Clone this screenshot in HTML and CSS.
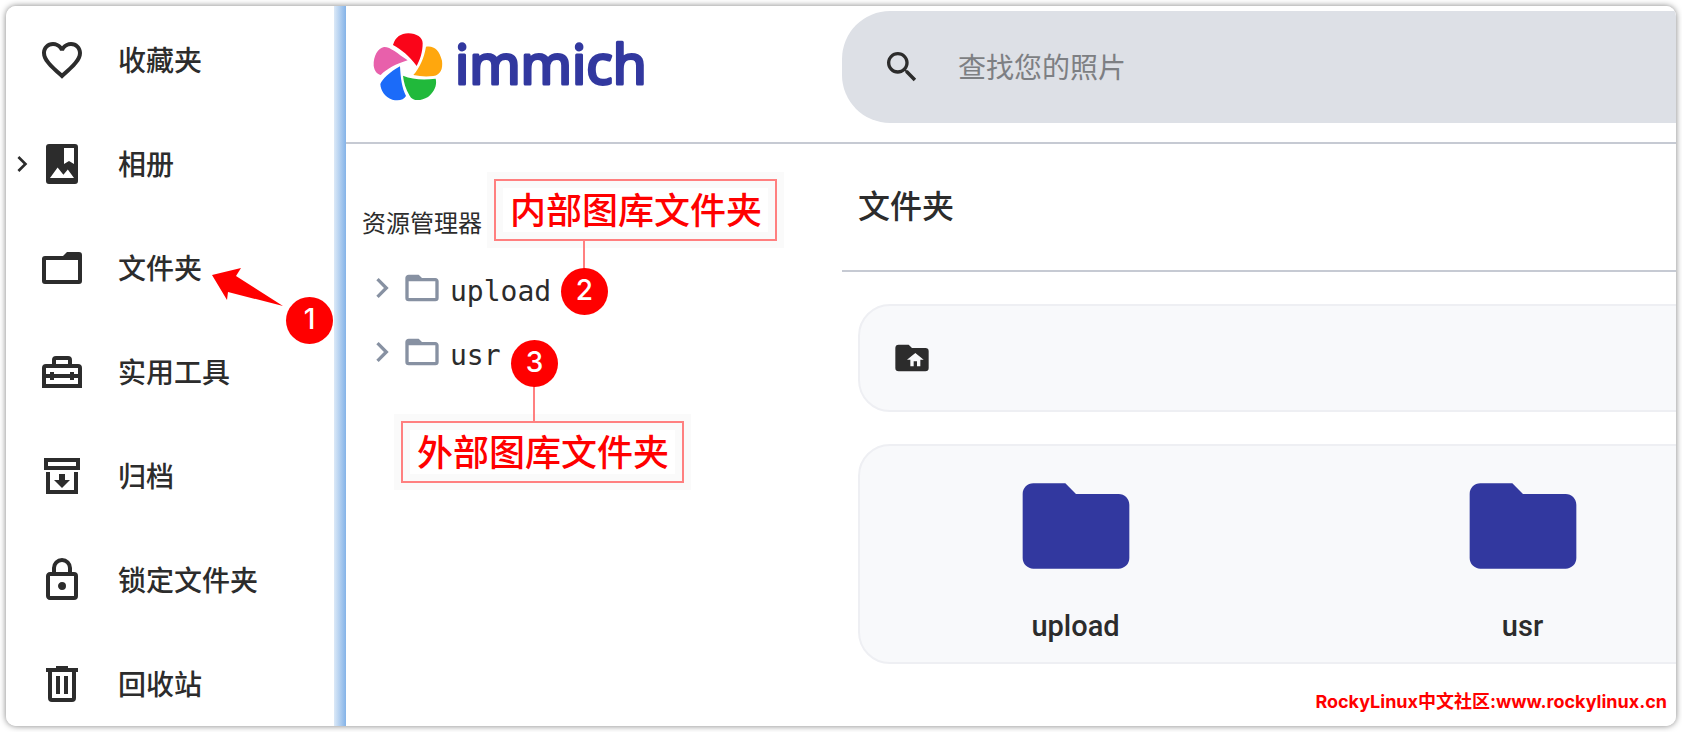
FILE: index.html
```html
<!DOCTYPE html>
<html lang="zh-CN">
<head>
<meta charset="UTF-8">
<meta name="viewport" content="width=device-width, initial-scale=1.0">
<title>文件夹 - immich</title>
<link rel="stylesheet" href="styles.css">
</head>
<body>

<div class="window">
    <nav class="sidebar">
        <a class="nav-item" href="#">
            <svg class="icon" viewBox="0 0 24 24"><path d="M12.1,18.55L12,18.65L11.89,18.55C7.14,14.24 4,11.39 4,8.5C4,6.5 5.5,5 7.5,5C9.04,5 10.54,6 11.07,7.36H12.93C13.46,6 14.96,5 16.5,5C18.5,5 20,6.5 20,8.5C20,11.39 16.86,14.24 12.1,18.55M16.5,3C14.76,3 13.09,3.81 12,5.08C10.91,3.81 9.24,3 7.5,3C4.42,3 2,5.41 2,8.5C2,12.27 5.4,15.36 10.55,20.03L12,21.35L13.45,20.03C18.6,15.36 22,12.27 22,8.5C22,5.41 19.58,3 16.5,3Z"/></svg>
            <span>收藏夹</span>
        </a>
        <a class="nav-item expandable" href="#">
            <svg class="chevron" viewBox="0 0 24 24"><path d="M8.59,16.58L13.17,12L8.59,7.41L10,6L16,12L10,18L8.59,16.58Z"/></svg>
            <svg class="icon" viewBox="0 0 24 24"><path fill-rule="evenodd" d="M5.5,2H18.5A1.5,1.5 0 0,1 20,3.5V20.5A1.5,1.5 0 0,1 18.5,22H5.5A1.5,1.5 0 0,1 4,20.5V3.5A1.5,1.5 0 0,1 5.5,2ZM13,4V12L15.5,10.5L18,12V4ZM6,19H18L14.9,14.8L12.7,17.4L9.8,13.8Z"/></svg>
            <span>相册</span>
        </a>
        <a class="nav-item" href="#">
            <svg class="icon" viewBox="0 0 24 24"><path fill-rule="evenodd" d="M3.5,6H12.5L14.5,4H20.5A1.5,1.5 0 0,1 22,5.5V18.5A1.5,1.5 0 0,1 20.5,20H3.5A1.5,1.5 0 0,1 2,18.5V7.5A1.5,1.5 0 0,1 3.5,6ZM4,8V18H20V8Z"/></svg>
            <span>文件夹</span>
        </a>
        <a class="nav-item" href="#">
            <svg class="icon line" viewBox="0 0 24 24"><path d="M3,19V10A1,1 0 0,1 4,9H20A1,1 0 0,1 21,10V19ZM8,9V6A1,1 0 0,1 9,5H15A1,1 0 0,1 16,6V9M3,14H21M7,12V16M17,12V16"/></svg>
            <span>实用工具</span>
        </a>
        <a class="nav-item" href="#">
            <svg class="icon" viewBox="0 0 24 24"><path fill-rule="evenodd" d="M3,3H21V9H3ZM5,5V7H19V5ZM4,10H6V19H18V10H20V21H4ZM10.5,11H13.5V14H16L12,18L8,14H10.5Z"/></svg>
            <span>归档</span>
        </a>
        <a class="nav-item" href="#">
            <svg class="icon" viewBox="0 0 24 24"><path d="M12,17C10.89,17 10,16.1 10,15C10,13.89 10.89,13 12,13A2,2 0 0,1 14,15A2,2 0 0,1 12,17M18,20V10H6V20H18M18,8A2,2 0 0,1 20,10V20A2,2 0 0,1 18,22H6C4.89,22 4,21.1 4,20V10C4,8.89 4.89,8 6,8H7V6A5,5 0 0,1 12,1A5,5 0 0,1 17,6V8H18M12,3A3,3 0 0,0 9,6V8H15V6A3,3 0 0,0 12,3Z"/></svg>
            <span>锁定文件夹</span>
        </a>
        <a class="nav-item" href="#">
            <svg class="icon" viewBox="0 0 24 24"><path d="M9,3V4H4V6H5V19A2,2 0 0,0 7,21H17A2,2 0 0,0 19,19V6H20V4H15V3H9M7,6H17V19H7V6M9,8V17H11V8H9M13,8V17H15V8H13Z"/></svg>
            <span>回收站</span>
        </a>
    </nav>

    <div class="app">
        <header class="topbar">
            <a class="logo" href="#">
                <svg class="logo-mark" viewBox="98 97 208 204">
                    <path fill="#fa0519" d="M157,133C165,108 180,99 203,98C228,99 246,110 246,128C246,155 238,178 228,196C205,165 182,147 157,133Z"/>
                    <path fill="#ffa70d" d="M256,138C280,134 296,148 304,180C307,205 300,222 278,226C255,229 238,227 218,223C238,200 250,172 256,138Z"/>
                    <path fill="#21b93b" d="M187,225C215,236 245,239 285,234C290,255 280,275 262,289C240,302 215,302 207,285C195,265 189,245 187,225Z"/>
                    <path fill="#1b6bf9" d="M178,197C146,215 125,235 119,250C120,270 132,288 155,297C175,302 190,297 196,286C184,262 180,235 178,197Z"/>
                    <path fill="#e860ab" d="M201,179C170,158 148,138 130,139C112,143 98,165 99,195C102,212 108,219 120,223C140,204 165,190 201,179Z"/>
                </svg>
                <svg class="logo-text" viewBox="0 0 200 72"><text x="0" y="53">immich</text></svg>
            </a>
            <label class="search">
                <svg class="icon-sm" viewBox="0 0 24 24"><path d="M9.5,3A6.5,6.5 0 0,1 16,9.5C16,11.11 15.41,12.59 14.44,13.73L14.71,14H15.5L20.5,19L19,20.5L14,15.5V14.71L13.73,14.44C12.59,15.41 11.11,16 9.5,16A6.5,6.5 0 0,1 3,9.5A6.5,6.5 0 0,1 9.5,3M9.5,5C7,5 5,7 5,9.5C5,12 7,14 9.5,14C12,14 14,12 14,9.5C14,7 12,5 9.5,5Z"/></svg>
                <input type="text" placeholder="查找您的照片" aria-label="查找您的照片">
            </label>
        </header>

        <div class="content">
            <aside class="explorer">
                <h2>资源管理器</h2>
                <ul class="tree">
                    <li>
                        <a href="#">
                            <svg class="icon-sm" viewBox="0 0 24 24"><path d="M8.59,16.58L13.17,12L8.59,7.41L10,6L16,12L10,18L8.59,16.58Z"/></svg>
                            <svg class="icon-sm" viewBox="0 0 24 24"><path d="M20,18H4V8H20M20,6H12L10,4H4C2.89,4 2,4.89 2,6V18A2,2 0 0,0 4,20H20A2,2 0 0,0 22,18V8C22,6.89 21.1,6 20,6Z"/></svg>
                            <span>upload</span>
                        </a>
                    </li>
                    <li>
                        <a href="#">
                            <svg class="icon-sm" viewBox="0 0 24 24"><path d="M8.59,16.58L13.17,12L8.59,7.41L10,6L16,12L10,18L8.59,16.58Z"/></svg>
                            <svg class="icon-sm" viewBox="0 0 24 24"><path d="M20,18H4V8H20M20,6H12L10,4H4C2.89,4 2,4.89 2,6V18A2,2 0 0,0 4,20H20A2,2 0 0,0 22,18V8C22,6.89 21.1,6 20,6Z"/></svg>
                            <span>usr</span>
                        </a>
                    </li>
                </ul>
            </aside>

            <main class="main">
                <h1>文件夹</h1>
                <div class="panels">
                    <div class="panel breadcrumbs">
                        <a href="#" aria-label="文件夹">
                            <svg class="icon-sm" viewBox="0 0 24 24"><path d="M20,6H12L10,4H4A2,2 0 0,0 2,6V18A2,2 0 0,0 4,20H20A2,2 0 0,0 22,18V8A2,2 0 0,0 20,6M17,13V17H15V14H13V17H11V13H9L14,9L19,13H17Z"/></svg>
                        </a>
                    </div>
                    <div class="panel folders">
                        <a class="folder" href="#">
                            <svg viewBox="0 0 24 24"><path d="M10,4H4C2.89,4 2,4.89 2,6V18A2,2 0 0,0 4,20H20A2,2 0 0,0 22,18V8C22,6.89 21.1,6 20,6H12L10,4Z"/></svg>
                            <span>upload</span>
                        </a>
                        <a class="folder" href="#">
                            <svg viewBox="0 0 24 24"><path d="M10,4H4C2.89,4 2,4.89 2,6V18A2,2 0 0,0 4,20H20A2,2 0 0,0 22,18V8C22,6.89 21.1,6 20,6H12L10,4Z"/></svg>
                            <span>usr</span>
                        </a>
                    </div>
                </div>
            </main>
        </div>
    </div>

    <!-- Step markers over the page -->
    <svg class="arrow" viewBox="0 0 72 40"><path d="M0,8L29,1L24,9L71,39L16,25L15,33Z"/></svg>
    <span class="callout callout-2">内部图库文件夹</span>
    <span class="callout callout-3">外部图库文件夹</span>
    <span class="connector connector-2"></span>
    <span class="connector connector-3"></span>
    <span class="step step-1">1</span>
    <span class="step step-2">2</span>
    <span class="step step-3">3</span>
    <span class="watermark">RockyLinux中文社区:www.rockylinux.cn</span>
</div>

</body>
</html>
```
FILE: styles.css
```css
* {
    box-sizing: border-box;
}
body {
    margin: 0;
    padding: 6px;
    background-color: #fff;
    color: #2c2c2c;
    font-family: "Noto Sans CJK SC", sans-serif;
    font-size: 28px;
}
a {
    color: inherit;
    text-decoration: none;
}
svg {
    display: block;
    flex: none;
    fill: currentColor;
}
h1, h2 {
    margin: 0;
    font-weight: 500;
}
.window {
    position: relative;
    display: flex;
    height: calc(100vh - 12px);
    overflow: hidden;
    border-radius: 10px;
    background-color: #fff;
}
body::before {
    content: "";
    position: absolute;
    inset: 6px;
    border-radius: 10px;
    box-shadow: 0 0 6px rgba(0, 0, 0, 0.5);
}

/* Sidebar */
.sidebar {
    flex: none;
    width: 340px;
    padding-top: 2px;
    background: linear-gradient(to right, #dce9f7, #84b3e8) right / 12px 100% no-repeat;
}
.nav-item {
    display: flex;
    align-items: center;
    height: 104px;
    padding-left: 32px;
    font-weight: 500;
    line-height: 40px;
}
.nav-item.expandable {
    padding-left: 0;
}
.nav-item span {
    margin-left: 32px;
    padding-bottom: 2px;
}
.icon {
    width: 48px;
    height: 48px;
}
.icon.line {
    fill: none;
    stroke: currentColor;
    stroke-width: 2;
}
.icon-sm {
    width: 40px;
    height: 40px;
}
.chevron {
    width: 32px;
    height: 32px;
}

/* Top bar */
.app {
    flex: 1;
    min-width: 0;
}
.topbar {
    display: flex;
    padding: 5px 0 19px;
    border-bottom: 2px solid #c6cad3;
}
.logo {
    display: flex;
    align-items: center;
    flex: none;
    width: 496px;
    padding-left: 27px;
}
.logo-mark {
    width: 70px;
    height: 68px;
}
.logo-text {
    width: 200px;
    height: 72px;
    margin-left: 12px;
    overflow: visible;
    fill: #32389f;
    stroke: #32389f;
    stroke-width: 3;
    stroke-linejoin: round;
    font-family: "Noto Sans", sans-serif;
    font-size: 55px;
}
.search {
    display: flex;
    align-items: center;
    flex: 1;
    height: 112px;
    padding-left: 40px;
    border-radius: 48px 0 0 48px;
    background-color: #dde0e6;
}
.search input {
    flex: 1;
    min-width: 0;
    margin-left: 36px;
    padding: 0 0 2px;
    border: none;
    outline: none;
    background: none;
    color: inherit;
    font: inherit;
    line-height: 40px;
}
.search input::placeholder {
    color: #7d7f83;
}

/* Folder tree */
.content {
    display: flex;
}
.explorer {
    flex: none;
    width: 496px;
    padding: 62px 16px 0;
}
.explorer h2 {
    margin-bottom: 18px;
    font-size: 24px;
    font-weight: 400;
    line-height: 32px;
}
.tree {
    margin: 0;
    padding: 0;
    list-style: none;
}
.tree a {
    display: flex;
    align-items: center;
    height: 64px;
}
.tree svg {
    color: #8791a2;
}
.tree span {
    margin-left: 8px;
    padding-top: 8px;
    font-family: "DejaVu Sans Mono", monospace;
    line-height: 40px;
}

/* Main */
.main {
    flex: 1;
    min-width: 0;
}
.main h1 {
    padding: 40px 16px 46px;
    border-bottom: 2px solid #c6cad3;
    font-size: 32px;
    line-height: 40px;
}
.panels {
    display: grid;
    gap: 32px;
    margin-right: -64px;
    padding: 32px 0 0 16px;
}
.panel {
    border: 2px solid #eeeff3;
    border-radius: 32px;
    background-color: #f8f9fb;
}
.breadcrumbs {
    display: flex;
    padding: 32px;
}
.folders {
    display: grid;
    grid-template-columns: 1fr 1fr;
    gap: 16px;
    padding: 16px 0;
}
.folder {
    display: flex;
    flex-direction: column;
    align-items: center;
    gap: 16px;
    font-family: Roboto, sans-serif;
    font-size: 29px;
    font-weight: 500;
    line-height: 40px;
}
.folder svg {
    width: 128px;
    height: 128px;
    color: #32389f;
}

/* Annotations */
.arrow {
    position: absolute;
    left: 206px;
    top: 261px;
    width: 72px;
    height: 40px;
    fill: #f00;
}
.step {
    position: absolute;
    width: 47px;
    height: 47px;
    border-radius: 50%;
    background-color: #f00;
    color: #fff;
    font-family: Inter, sans-serif;
    font-weight: 500;
    line-height: 44px;
    text-align: center;
}
.step-1 {
    left: 280px;
    top: 291px;
}
.step-2 {
    left: 555px;
    top: 262px;
}
.step-3 {
    left: 505px;
    top: 334px;
}
.connector {
    position: absolute;
    width: 2px;
    background-color: #ff8080;
}
.connector-2 {
    left: 577px;
    top: 234px;
    height: 30px;
}
.connector-3 {
    left: 527px;
    top: 380px;
    height: 36px;
}
.callout {
    position: absolute;
    padding: 7px 13px 11px 14px;
    border: 2px solid #ff8080;
    background-color: #fff;
    box-shadow: 0 0 0 7px #fafafa, inset 0 0 0 7px #fafafa;
    color: #f00;
    font-size: 36px;
    font-weight: 500;
    line-height: 40px;
    white-space: nowrap;
}
.callout-2 {
    left: 488px;
    top: 173px;
}
.callout-3 {
    left: 395px;
    top: 415px;
}
.watermark {
    position: absolute;
    right: 9px;
    bottom: 11px;
    color: #f00;
    font-family: Inter, "Noto Sans CJK SC", sans-serif;
    font-size: 18px;
    font-weight: 700;
    line-height: 26px;
}
```
